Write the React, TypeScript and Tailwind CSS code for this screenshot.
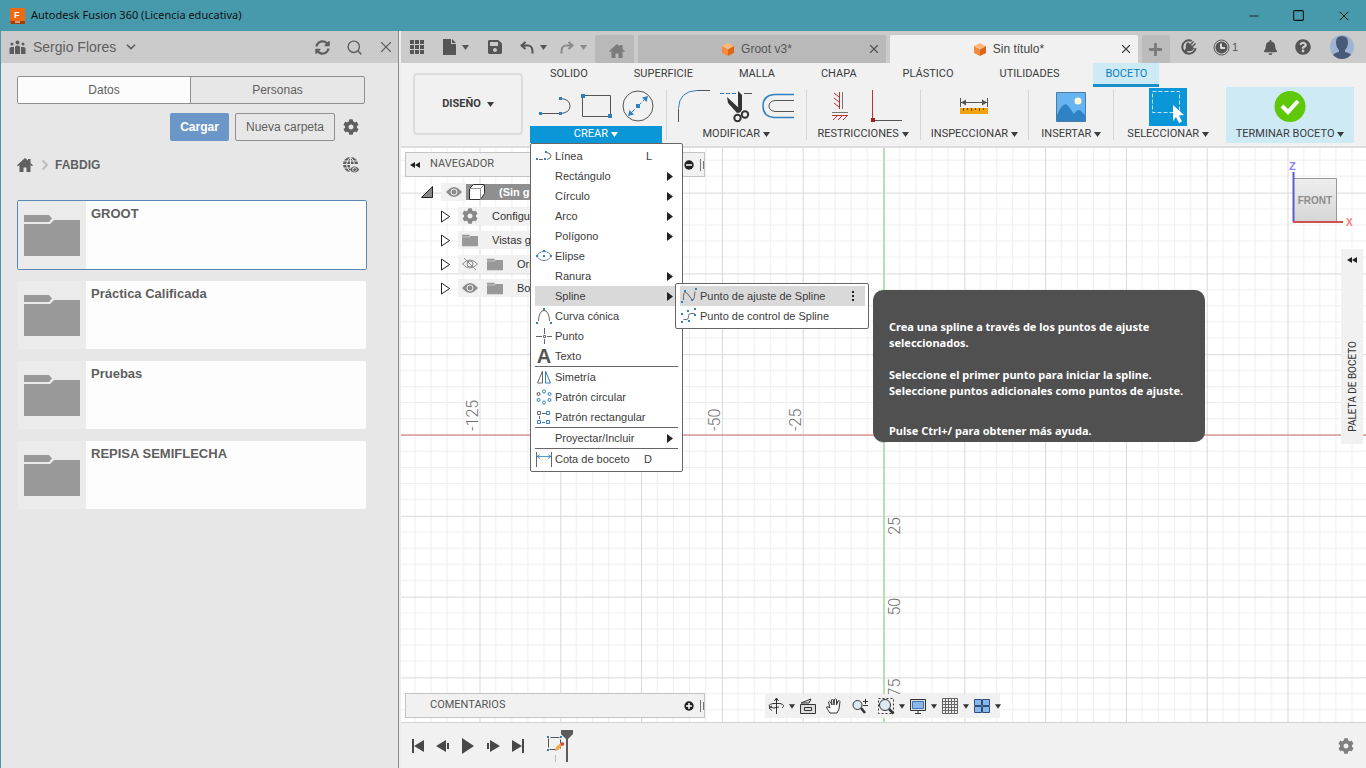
import type { ReactNode } from 'react';
import { ChevronDown, ChevronRight, Minus, Search, Square, X } from 'lucide-react';
import { FaBell, FaCog, FaEye, FaPlus, FaQuestionCircle, FaSave, FaSyncAlt } from 'react-icons/fa';

const BLUE = '#2f7fc1';

function Caret({ className = '' }: { className?: string }) {
  return (
    <svg className={`shrink-0 ${className}`} width="7" height="5" viewBox="0 0 7 5" fill="currentColor">
      <path d="M0 0h7L3.5 5z" />
    </svg>
  );
}

function IconCube() {
  return (
    <svg width="14" height="15" viewBox="0 0 14 15">
      <path d="M7 1l6 3-6 3.5L1 4z" fill="#ffb87a" />
      <path d="M1 4l6 3.5V14l-6-3z" fill="#f58a3c" />
      <path d="M13 4L7 7.500V14l6-3z" fill="#d9661a" />
    </svg>
  );
}

function IconHome() {
  return (
    <svg width="16" height="14" viewBox="0 0 16 14" fill="currentColor">
      <path d="M8 0l3 2.600V1h2.500v4L16 7.200l-1 1-1.500-1.200V14H9.500V9.500h-3V14h-4V7L1 8.200l-1-1z" />
    </svg>
  );
}

function IconGlobe() {
  return (
    <svg width="16" height="16" viewBox="0 0 16 16" fill="none" stroke="#e7e7e7">
      <circle cx="7.500" cy="7.500" r="7.500" fill="#5d5d5d" stroke="none" />
      <path d="M7.500 0v15M0 7.500h15M1 4h13M1 11h13M7.500 0q-8 7.500 0 15M7.500 0q8 7.500 0 15" />
    </svg>
  );
}

function IconPeople() {
  return (
    <svg width="17" height="15" viewBox="0 0 17 15" fill="#5d5d5d">
      <circle cx="8.500" cy="2.500" r="2" /><circle cx="3" cy="4" r="1.500" /><circle cx="14" cy="4" r="1.500" />
      <path d="M6 14V7q0-1.500 2.500-1.500T11 7v7zM.5 14V8.500q0-1.500 2-1.500H5v7zM16.500 14V8.500q0-1.500-2-1.500H12v7z" />
    </svg>
  );
}

function IconFolder({ width = 56, height = 41 }: { width?: number; height?: number }) {
  return (
    <svg width={width} height={height} viewBox="0 0 56 41" fill="#999">
      <path d="M0 0h25l3 3.500L25 7H0z" />
      <path d="M0 9h26l4-4h26v36H0z" />
    </svg>
  );
}

// ---------- Data panel ----------

const FOLDERS = ['GROOT', 'Práctica Calificada', 'Pruebas', 'REPISA SEMIFLECHA'];

function DataPanel() {
  return (
    <aside className="flex w-[399px] shrink-0 flex-col border-l border-l-[#469aac] border-r border-r-[#8c8c8c] bg-[#e7e7e7] text-[#5f5f5f]">
      <div className="flex h-8 items-center bg-[#cbcbcb] pl-2 pr-[3px]">
        <IconPeople />
        <button className="ml-[7px] flex items-center gap-2 text-sm">
          Sergio Flores <ChevronDown size={14} strokeWidth={3} />
        </button>
        <button className="ml-auto" aria-label="Actualizar"><FaSyncAlt size={15} /></button>
        <button className="ml-4" aria-label="Buscar"><Search size={17} strokeWidth={2} /></button>
        <button className="ml-[14px]" aria-label="Cerrar panel"><X size={18} strokeWidth={1.500} /></button>
      </div>

      <div className="flex flex-col pl-4 pr-[33px] pt-[13px] text-xs">
        <div className="grid h-7 grid-cols-2 overflow-hidden rounded-xs border border-[#8f8f8f]">
          <button className="border-r border-[#8f8f8f] bg-[#fcfcfc]">Datos</button>
          <button>Personas</button>
        </div>

        <div className="mt-[9px] flex items-center justify-end pr-[6px]">
          <button className="h-7 w-[59px] rounded-xs bg-[#6b96c8] font-bold text-white">Cargar</button>
          <button className="ml-[6px] h-7 w-[100px] rounded-xs border border-[#8f8f8f]">Nueva carpeta</button>
          <button className="ml-2" aria-label="Configuración"><FaCog size={16} /></button>
        </div>

        <div className="mt-[15px] flex h-[18px] items-center pr-[6px]">
          <button aria-label="Inicio"><IconHome /></button>
          <ChevronRight className="ml-1 text-[#bdbdbd]" size={16} strokeWidth={3} />
          <span className="ml-[2px] font-bold">FABDIG</span>
          <button className="relative ml-auto" aria-label="Vista web">
            <IconGlobe />
            <FaEye className="absolute -bottom-px right-0 bg-[#e7e7e7]" size={9} />
          </button>
        </div>
      </div>

      <div className="mt-[26px] flex flex-col gap-[10px] pl-4 pr-[31px]">
        {FOLDERS.map((name, i) => (
          <button
            key={name}
            className={`flex h-[70px] overflow-hidden rounded-xs border text-left ${i === 0 ? 'border-[#5c86b8]' : 'border-[#e7e7e7]'}`}
          >
            <span className="flex h-full w-[68px] items-center justify-center bg-[#ebebeb]"><IconFolder /></span>
            <span className="h-full flex-1 bg-[#fdfdfd] pl-[5px] pt-[5px] text-[13px] leading-4 font-bold">{name}</span>
          </button>
        ))}
      </div>
    </aside>
  );
}

// ---------- Document tabs ----------

function DocTab({ title, active }: { title: string; active?: boolean }) {
  return (
    <div className={`flex h-7 min-w-0 flex-1 items-center rounded-t-xs pl-2 pr-[5px] text-xs ${active ? 'bg-[#f1f1f1] text-[#444]' : 'bg-[#b9b9b9] text-[#555]'}`}>
      <button className="flex flex-1 items-center justify-center gap-[6px]"><IconCube />{title}</button>
      <button aria-label={`Cerrar ${title}`}><X size={14} strokeWidth={2} /></button>
    </div>
  );
}

function AppBar() {
  return (
    <div className="flex h-8 items-center bg-[#cbcbcb] text-[#555]">
      <div className="flex shrink-0 items-center pl-[9px] pr-2">
        <button aria-label="Panel de datos">
          <svg width="14" height="14" viewBox="0 0 14 14" fill="currentColor">
            <path d="M0 0h4v4H0zM5 0h4v4H5zM10 0h4v4h-4zM0 5h4v4H0zM5 5h4v4H5zM10 5h4v4h-4zM0 10h4v4H0zM5 10h4v4H5zM10 10h4v4h-4z" />
          </svg>
        </button>
        <button className="ml-[19px] flex items-center gap-[6px]" aria-label="Archivo">
          <svg width="13" height="16" viewBox="0 0 13 16" fill="currentColor"><path d="M0 0h8v5h5v11H0zM9 0l4 4H9z" /></svg>
          <Caret />
        </button>
        <button className="ml-[18px]" aria-label="Guardar"><FaSave size={16} /></button>
        <button className="ml-[17px] flex items-center gap-[6px]" aria-label="Deshacer">
          <svg width="14" height="13" viewBox="0 0 14 13" fill="none" stroke="currentColor" strokeWidth="2"><path d="M5.500 1L1.500 4.500l4 3.500M2 4.500h6q5 0 4.500 8" /></svg>
          <Caret />
        </button>
        <button className="ml-[13px] flex items-center gap-[6px] text-[#8b8b8b]" aria-label="Rehacer">
          <svg width="14" height="13" viewBox="0 0 14 13" fill="none" stroke="currentColor" strokeWidth="2"><path d="M8.500 1l4 3.500-4 3.500M12 4.500H6q-5 0-4.500 8" /></svg>
          <Caret />
        </button>
      </div>

      <div className="flex min-w-0 flex-1 items-end gap-1 self-end">
        <button className="flex h-7 w-[39px] items-center justify-center rounded-t-xs bg-[#b9b9b9] pl-1 pt-1 text-[#7b7b7b]" aria-label="Inicio"><IconHome /></button>
        <DocTab title="Groot v3*" />
        <DocTab title="Sin título*" active />
        <button className="flex h-7 w-7 items-center justify-center rounded-t-xs bg-[#bcbcbc] text-[#7b7b7b]" aria-label="Nuevo diseño"><FaPlus size={15} /></button>
      </div>

      <div className="flex shrink-0 items-center pl-[11px] pr-3">
        <button aria-label="Extensiones">
          <svg width="16" height="16" viewBox="0 0 16 16">
            <circle cx="8" cy="8" r="6.700" fill="none" stroke="#555" strokeWidth="2" strokeDasharray="33 9" transform="rotate(10 8 8)" />
            <path d="M3 12l2-3q-1-4 2-6l2 2 3-3 1 1-3 3 1 1 3-3 1 1-3 3 1 2q-3 3-6 2l-3 2z" fill="#555" />
          </svg>
        </button>
        <button className="ml-4 flex items-center gap-[2px] text-[11px]">
          <svg width="17" height="17" viewBox="0 0 17 17">
            <circle cx="8.500" cy="8.500" r="7.500" fill="none" stroke="#555" />
            <circle cx="8.500" cy="8.500" r="6" fill="#555" />
            <path d="M8 4.500V9h4" fill="none" stroke="#fff" strokeWidth="1.500" />
          </svg>
          1
        </button>
        <button className="ml-[25px]" aria-label="Notificaciones"><FaBell size={15} /></button>
        <button className="ml-[17px]" aria-label="Ayuda"><FaQuestionCircle size={16} /></button>
        <button className="ml-[19px]" aria-label="Perfil">
          <svg width="24" height="24" viewBox="0 0 24 24">
            <circle cx="12" cy="12" r="12" fill="#9db4d2" />
            <path d="M12 1q6 0 6 6 0 5-3 8v2q5 1 6 3-4 4-9 4t-9-4q1-2 6-3v-2Q6 12 6 7q0-6 6-6z" fill="#485a78" />
          </svg>
        </button>
      </div>
    </div>
  );
}

// ---------- Ribbon ----------

const RIBBON_TABS = ['SOLIDO', 'SUPERFICIE', 'MALLA', 'CHAPA', 'PLÁSTICO', 'UTILIDADES', 'BOCETO'];

function RibbonGroup({ label, width, open, finish, icons, children }: {
  label: string; width: string; open?: boolean; finish?: boolean; icons: ReactNode; children?: ReactNode;
}) {
  return (
    <div className={`relative flex flex-col ${width} ${finish ? 'bg-[#cdeaf5]' : ''}`}>
      <div className="flex h-[39px] items-center justify-center gap-2">{icons}</div>
      <button className={`flex h-[17px] items-center justify-center gap-[3px] whitespace-nowrap ${open ? 'bg-[#0b96d8] text-white' : ''}`}>
        {label} <Caret />
      </button>
      {children}
    </div>
  );
}

const Separator = () => <div className="mt-[3px] h-[50px] w-px bg-[#d6d6d6]" />;

function Ribbon() {
  return (
    <div className="flex h-[85px] border-b-2 border-[#dedede] bg-[#f1f1f1] font-[Roboto,sans-serif] text-[11px] text-[#3c3c3c]">
      <button className="ml-3 mt-[10px] flex h-[62px] w-[110px] shrink-0 items-center justify-center gap-[6px] rounded-sm border-2 border-[#dcdcdc] font-bold">
        DISEÑO <Caret />
      </button>

      <div className="ml-[7px] flex min-w-0 flex-1 flex-col">
        <div className="flex h-6 gap-[22px] pl-2">
          {RIBBON_TABS.map(tab => (
            <button
              key={tab}
              className={`border-b-3 px-3 pt-[2px] ${tab === 'BOCETO' ? 'border-[#1b8fc9] bg-[#cdeaf5] text-[#0a7fc0]' : 'border-transparent'}`}
            >
              {tab}
            </button>
          ))}
        </div>

        <div className="flex pr-3">
          <RibbonGroup
            label="CREAR"
            width="w-[132px]"
            open
            icons={
              <>
                <svg width="34" height="32" viewBox="0 0 34 32" fill="none" stroke="#555">
                  <path d="M3 22.500h20M23 7.500q9 1 9 7.500t-9 7.500" />
                  <path d="M1 21h3v3H1zM21 21h3v3h-3zM21 6h3v3h-3z" fill={BLUE} stroke="none" />
                </svg>
                <svg width="32" height="32" viewBox="0 0 32 32" fill="none" stroke="#555">
                  <path d="M2.500 4.500h28v21h-28z" />
                  <path d="M1 3h4v4H1zM28 23h4v4h-4z" fill={BLUE} stroke="none" />
                </svg>
                <svg width="34" height="34" viewBox="0 0 34 34" fill="none">
                  <circle cx="18" cy="16" r="15" stroke="#555" />
                  <path d="M10 24L26 8" stroke={BLUE} strokeDasharray="7 2" />
                  <path d="M28 6l-1.500 6-4.500-4.500zM8 26l1.500-6L14 24.500zM16 14h4v4h-4z" fill={BLUE} />
                </svg>
              </>
            }
          >
            <CreateMenu />
          </RibbonGroup>
          <div className="w-1" />
          <Separator />
          <RibbonGroup
            label="MODIFICAR"
            width="w-[139px]"
            icons={
              <>
                <svg width="34" height="34" viewBox="0 0 34 34" fill="none">
                  <path d="M1.500 18.500Q2 1 20 .5" stroke={BLUE} /><path d="M20 .5h13M1.500 19v13" stroke="#555" />
                </svg>
                <svg width="34" height="34" viewBox="0 0 34 34" fill="none">
                  <path d="M1 3.500h18" stroke={BLUE} strokeDasharray="4 2" /><path d="M25 3.500h8" stroke="#555" />
                  <path d="M19 1l4 4v15l-3 3-1-8zM8 7l13 12 1 3-4 1-9-10z" fill="#333" />
                  <circle cx="18.500" cy="28" r="3.200" stroke="#333" strokeWidth="2" /><circle cx="26" cy="24.500" r="3.200" stroke="#333" strokeWidth="2" />
                </svg>
                <svg width="34" height="34" viewBox="0 0 34 34" fill="none">
                  <path d="M33 4.500H13q-11 1-11 11.500T13 27.500h20" stroke={BLUE} strokeWidth="1.500" />
                  <path d="M33 10.500H14q-6 1-6 5.500t6 5.500h19" stroke="#555" />
                </svg>
              </>
            }
          />
          <Separator />
          <RibbonGroup
            label="RESTRICCIONES"
            width="w-[113px]"
            icons={
              <div className="flex gap-5 pl-2">
                <svg width="18" height="34" viewBox="0 0 18 34" fill="none" stroke="#c03030">
                  <path d="M8.500 2v17M3 3l5 4M3 8l5 4M3 13l5 4M2 30l4-4M7 30l4-4M12 30l4-4M1 25.500h16" />
                  <path d="M11.500 2v17M1 22.500h16" stroke="#777" />
                </svg>
                <svg width="34" height="34" viewBox="0 0 34 34" fill="none">
                  <path d="M3.500 0v30" stroke="#c03030" /><path d="M4 30.500h29" stroke="#555" /><path d="M2 28h4v4H2z" fill="#a02020" />
                </svg>
              </div>
            }
          />
          <Separator />
          <RibbonGroup
            label="INSPECCIONAR"
            width="w-[108px]"
            icons={
              <svg width="30" height="22" viewBox="0 0 30 22">
                <path d="M1.500 2v9M28.500 2v9M2 6.500h26" stroke="#555" />
                <path d="M2 6.500l5-3v6zM28 6.500l-5-3v6z" fill="#555" />
                <path d="M1 12h28v6H1z" fill="#f0a30c" />
                <path d="M4.500 12v3M8.500 12v2M12.500 12v3M16.500 12v2M20.500 12v3M24.500 12v2" stroke="#6b4a00" />
              </svg>
            }
          />
          <Separator />
          <RibbonGroup
            label="INSERTAR"
            width="w-[84px]"
            icons={
              <svg width="30" height="30" viewBox="0 0 30 30">
                <path d="M.5.5h29v29H.5z" fill="#66b5f2" stroke="#4b7ba6" />
                <path d="M1 23q7-16 12-8l5 7q4-6 7-3l4 4v6H1z" fill="#2f83c4" />
                <circle cx="22" cy="9" r="3.500" fill="#fffbd8" />
              </svg>
            }
          />
          <Separator />
          <RibbonGroup
            label="SELECCIONAR"
            width="w-[108px]"
            icons={
              <svg width="38" height="38" viewBox="0 0 38 38">
                <path d="M0 0h38v38H0z" fill="#0b96d8" />
                <path d="M3.500 3.500h27v21h-27z" fill="none" stroke="#bfe3f5" strokeDasharray="4 2" />
                <path d="M24 17l11 10-5 .5 3 6-3 1.500-3-6-3 4z" fill="#fff" />
              </svg>
            }
          />
          <div className="min-w-1 flex-1" />
          <RibbonGroup
            label="TERMINAR BOCETO"
            width="w-[128px]"
            finish
            icons={
              <svg width="32" height="32" viewBox="0 0 32 32">
                <circle cx="16" cy="15.500" r="15.500" fill="#5fc808" />
                <path d="M8 15l6 6 10-11" fill="none" stroke="#fff" strokeWidth="4" />
              </svg>
            }
          />
        </div>
      </div>
    </div>
  );
}

// ---------- Create menu ----------

// 16x16 glyphs, dots are the sketch points
const dots = (pts: number[][]) => pts.map(([x, y]) => <rect key={`${x}-${y}`} x={x} y={y} width="2" height="2" fill={BLUE} stroke="none" />);

const MENU_ICONS: Record<string, ReactNode> = {
  line: <>{dots([[0, 10], [8, 10], [9, 3]])}<path d="M3 11.500h4M11 4.500q4 1 4 3.500t-4 3.500" /></>,
  ellipse: <><ellipse cx="8" cy="8" rx="6.500" ry="4.500" stroke="#6b8cab" />{dots([[7, 7], [0, 7], [14, 7], [7, 2]])}</>,
  conic: <><path d="M2.500 13Q3 2.500 8 2.500T13.500 13" />{dots([[0, 14], [14, 14], [7, 0]])}</>,
  point: <path d="M8.500 0v6M8.500 11v5M0 8.500h6M11 8.500h5M7.500 7.500h2v2h-2z" />,
  mirror: <><path d="M6.500 2v12h-5z" /><path d="M9.500 2v12h5z" stroke={BLUE} /></>,
  circular: (
    <g stroke={BLUE}>
      <circle cx="8" cy="2.500" r="1.500" /><circle cx="13.500" cy="5" r="1.500" /><circle cx="13.500" cy="11" r="1.500" />
      <circle cx="8" cy="13.500" r="1.500" /><circle cx="2.500" cy="11" r="1.500" /><circle cx="2.500" cy="5" r="1.500" stroke="#555" />
    </g>
  ),
  rectangular: (
    <>
      <path d="M1.500 2.500h3v3h-3zM6 4.500h4M3.500 7v3" />
      <path d="M10.500 2.500h3v3h-3zM1.500 11.500h3v3h-3zM10.500 11.500h3v3h-3zM6 13.500h3" stroke={BLUE} />
    </>
  ),
  dimension: <><path d="M.5 1v15M15.500 1v15" /><path d="M1 5.500h14M4 3.500l-3 2 3 2M12 3.500l3 2-3 2" stroke={BLUE} strokeWidth=".8" /></>,
  fit: <><path d="M2.500 12Q2 4 4.500 4.500T10 10.500t4-7" />{dots([[0, 13], [3, 2], [10, 11], [14, 0]])}</>,
  control: <><path d="M2.500 11.500h3q2 0 2-3t2-3h4" />{dots([[0, 5], [0, 13], [7, 12], [6, 2], [13, 0], [13, 6]])}</>,
};

type MenuEntry = { label: string; icon?: string; sub?: boolean; shortcut?: string } | null;

const MENU: MenuEntry[] = [
  { label: 'Línea', icon: 'line', shortcut: 'L' },
  { label: 'Rectángulo', sub: true },
  { label: 'Círculo', sub: true },
  { label: 'Arco', sub: true },
  { label: 'Polígono', sub: true },
  { label: 'Elipse', icon: 'ellipse' },
  { label: 'Ranura', sub: true },
  { label: 'Spline', sub: true },
  { label: 'Curva cónica', icon: 'conic' },
  { label: 'Punto', icon: 'point' },
  { label: 'Texto', icon: 'text' },
  null,
  { label: 'Simetría', icon: 'mirror' },
  { label: 'Patrón circular', icon: 'circular' },
  { label: 'Patrón rectangular', icon: 'rectangular' },
  null,
  { label: 'Proyectar/Incluir', sub: true },
  null,
  { label: 'Cota de boceto', icon: 'dimension', shortcut: 'D' },
];

function MenuIcon({ name }: { name?: string }) {
  if (name === 'text') return <span className="w-4 shrink-0 text-center text-xl leading-5 font-bold text-[#555]">A</span>;
  return (
    <svg className="shrink-0" width="16" height="16" viewBox="0 0 16 16" fill="none" stroke="#666">
      {name && MENU_ICONS[name]}
    </svg>
  );
}

function CreateMenu() {
  return (
    <div className="absolute left-0 top-full z-20 flex w-[153px] flex-col rounded-xs border border-[#666] bg-white py-[2px] pl-1 font-['Liberation_Sans',sans-serif] text-[11px] text-[#3c3c3c]">
      {MENU.map((item, i) => {
        if (!item) return <hr key={i} className="mr-1 border-[#666]" />;
        const open = item.label === 'Spline';
        return (
          <div key={item.label} className={`relative ${open ? 'bg-[#d9d9d9]' : ''}`}>
            <button className="flex h-5 w-full items-center gap-[3px] pl-px text-left whitespace-nowrap">
              <MenuIcon name={item.icon} />
              {item.label}
              {item.shortcut && <span className="ml-auto pr-[30px]">{item.shortcut}</span>}
              {item.sub && (
                <svg className="ml-auto mr-[9px]" width="6" height="9" viewBox="0 0 6 9" fill="#222"><path d="M0 0v9l6-4.500z" /></svg>
              )}
            </button>
            {open && <SplineMenu />}
          </div>
        );
      })}
    </div>
  );
}

function SplineMenu() {
  return (
    <div className="absolute -top-[3px] left-[140px] w-[194px] rounded-xs border border-[#666] bg-white py-[2px] pl-1 pr-[3px]">
      <button className="flex h-5 w-full items-center gap-[3px] bg-[#d9d9d9] pl-px whitespace-nowrap">
        <MenuIcon name="fit" />
        Punto de ajuste de Spline
        <svg className="ml-auto mr-[10px]" width="3" height="12" viewBox="0 0 3 12" fill="#222"><path d="M0 1h2v2H0zM0 5h2v2H0zM0 9h2v2H0z" /></svg>
      </button>
      <button className="flex h-5 w-full items-center gap-[3px] pl-px whitespace-nowrap">
        <MenuIcon name="control" />
        Punto de control de Spline
      </button>
      <div role="tooltip" className="absolute left-[197px] top-[6px] flex w-[332px] flex-col gap-4 rounded-[10px] bg-[#505050] pb-[3px] pl-4 pr-2 pt-[29px] font-['Noto_Sans',sans-serif] text-[11px] leading-4 font-bold text-white">
        <p>Crea una spline a través de los puntos de ajuste<br />seleccionados.</p>
        <p>Seleccione el primer punto para iniciar la spline.<br />Seleccione puntos adicionales como puntos de ajuste.</p>
        <p className="mt-2">Pulse Ctrl+/ para obtener más ayuda.</p>
      </div>
    </div>
  );
}

// ---------- Canvas ----------

const RULER_X = [-125, -50, -25];
const RULER_Y = [25, 50, 75];
const STEP = 80.8; // 25 mm on screen

function SketchGrid() {
  return (
    <svg className="absolute inset-0 h-full w-full">
      <defs>
        <pattern id="grid" width={STEP} height={STEP} patternUnits="userSpaceOnUse">
          {[1, 2, 3, 4].map(n => (
            <path key={n} d={`M${(n * STEP) / 5} 0V${STEP}M0 ${(n * STEP) / 5}H${STEP}`} stroke="#eeeeee" />
          ))}
          <path d={`M.5 0V${STEP}M0 .5H${STEP}`} stroke="#d8d8d8" />
        </pattern>
      </defs>
      <svg x="50%" y="50%" overflow="visible">
        <rect x="-2020" y="-2020" width="4040" height="4040" fill="url(#grid)" />
        <path d="M-2020 0H2020" stroke="#dc9a9a" strokeWidth="1.500" />
        <path d="M.5-2020V2020" stroke="#b4e0b4" strokeWidth="2" />
        <g className="font-[Roboto,sans-serif] text-[16px] font-light" fill="#6f6f6f">
          {RULER_X.map(v => <text key={v} transform={`translate(${(v / 25) * STEP - 2} -4) rotate(-90)`}>{v}</text>)}
          {RULER_Y.map(v => <text key={v} transform={`translate(16 ${(v / 25) * STEP + 19}) rotate(-90)`}>{v}</text>)}
        </g>
        <circle cx="0" cy="0" r="8" fill="#b5c8b5" />
      </svg>
    </svg>
  );
}

function Rewind() {
  return <svg width="10" height="6" viewBox="0 0 10 6" fill="#222"><path d="M5 0v6L0 3zM10 0v6L5 3z" /></svg>;
}

function PanelEnd({ plus }: { plus?: boolean }) {
  return (
    <span className="ml-auto flex items-center gap-[6px]">
      <svg width="10" height="10" viewBox="0 0 10 10"><circle cx="5" cy="5" r="4.700" fill="#222" /><path d={plus ? 'M2 5h6M5 2v6' : 'M2 5h6'} stroke="#fff" strokeWidth="1.500" /></svg>
      <svg width="4" height="12" viewBox="0 0 4 12" stroke="#777"><path d="M.5 0v12M3.500 2v8" /></svg>
    </span>
  );
}

function Eye({ off }: { off?: boolean }) {
  return (
    <svg className="shrink-0" width="16" height="14" viewBox="0 0 16 14" fill="none" stroke="#8c8c8c">
      {off ? (
        <><path d="M.5 7Q8-1 15.500 7 8 15 .5 7z" /><circle cx="8" cy="7" r="3" /><path d="M2 1l12 12" /></>
      ) : (
        <><path d="M.5 7Q8-2 15.500 7 8 16 .5 7z" fill="#8c8c8c" /><circle cx="8" cy="7" r="3" stroke="#f1f1f1" /></>
      )}
    </svg>
  );
}

const BROWSER_ROWS = [
  { label: 'Configuración', icon: <FaCog className="shrink-0" size={16} color="#888" /> },
  { label: 'Vistas guardadas', icon: <IconFolder width={16} height={13} /> },
  { label: 'Origen', icon: <IconFolder width={16} height={13} />, eye: 'off' },
  { label: 'Bocetos', icon: <IconFolder width={16} height={13} />, eye: 'on' },
];

function BrowserPanel() {
  return (
    <div className="absolute left-1 top-1 w-[300px] font-[Roboto,sans-serif] text-[11px] text-[#555]">
      <div className="flex h-[25px] items-center border border-[#c4c4c4] bg-[#f1f1f1] pl-1">
        <button aria-label="Contraer"><Rewind /></button>
        <span className="ml-[10px]">NAVEGADOR</span>
        <PanelEnd />
      </div>
      <div className="flex w-[126px] flex-col overflow-hidden pt-[3px] font-['Liberation_Sans',sans-serif] whitespace-nowrap text-[#333]">
        <div className="flex h-6 items-center pl-4">
          <svg className="shrink-0" width="12" height="12" viewBox="0 0 12 12"><path d="M11.500.5v11H.5z" fill="#888" stroke="#222" /></svg>
          <span className="ml-2 flex h-[18px] w-[25px] shrink-0 items-center justify-center bg-[#f1f1f1]"><Eye /></span>
          <span className="flex h-4 min-w-0 flex-1 items-center overflow-hidden bg-[#8f8f8f] pl-[3px] font-bold text-white">
            <svg className="shrink-0" width="16" height="16" viewBox="0 0 16 16" fill="#fff" stroke="#333"><path d="M.5 4.500l4-4h11v9l-4 6H.5z" /><path d="M.5 4.500h11v11M11.500 4.500l4-4" stroke="#999" /></svg>
            <span className="ml-[14px] min-w-0 flex-1 overflow-hidden">(Sin guardar)</span>
          </span>
        </div>
        {BROWSER_ROWS.map(row => (
          <div key={row.label} className="flex h-6 items-center pl-9">
            <svg className="shrink-0" width="9" height="13" viewBox="0 0 9 13" fill="#fff" stroke="#222"><path d="M.5 1v11l8-5.500z" /></svg>
            <span className="ml-2 flex h-[18px] min-w-0 flex-1 items-center bg-[#f1f1f1] pl-1">
              {row.eye && <span className="mr-[9px]"><Eye off={row.eye === 'off'} /></span>}
              <span className="shrink-0">{row.icon}</span>
              <span className="ml-[14px] min-w-0 flex-1 overflow-hidden">{row.label}</span>
            </span>
          </div>
        ))}
      </div>
    </div>
  );
}

const NAV_ICONS = [
  { label: 'Orbitar', caret: true, icon: <path d="M8.500 0v16M6.500 3l2-3 2 3M14 10q4-3-2-4.500H5Q-1 7 2 9t9 0M4 8l-3 2 3 2.500" /> },
  { label: 'Mirar a', icon: <path d="M.5 6.500h15v9H.5zM4.500 9.500h7v3h-7zM1 5l10-4-2 4z" fill="#ddd" /> },
  { label: 'Encuadre', icon: <path d="M4 15q-3-4-3.500-6 1-1 3.500 1L2.500 4q1-1.500 2 0L6 7 5.500 2Q6.500 0 7.500 2L8 7l.5-5.500q1-1.500 2 0L10.500 7 12 3q1.500-1 2 .5L13 11l-2 4z" fill="#fff" /> },
  { label: 'Zoom', icon: <><circle cx="5.500" cy="7" r="4.500" fill="#dceaf2" /><path d="M9 10l4 5" strokeWidth="2.500" /><path d="M11 3.500h5M13.500 1v5M11 7.500h5" /></> },
  { label: 'Ajustar', caret: true, icon: <><path d="M.5.5h15v15H.5z" strokeDasharray="2 2" /><circle cx="7" cy="7" r="5.500" fill="#dceaf2" /><path d="M11 11l4.500 4.500" strokeWidth="2.500" /></> },
  { label: 'Visualización', caret: true, icon: <><path d="M.5 1.500h15v11H.5zM5 15.500h6M8 13v2" fill="#ddd" /><path d="M2.500 3.500h11v7h-11z" fill="#8bb6ea" stroke="#3f74b5" /></> },
  { label: 'Rejilla', caret: true, icon: <path d="M.5.5h15v15H.5zM3.500 0v16M6.500 0v16M9.500 0v16M12.500 0v16M0 3.500h16M0 6.500h16M0 9.500h16M0 12.500h16" stroke="#666" /> },
  { label: 'Ventanas', caret: true, icon: <path d="M.5 1.500h7v6h-7zM8.500 1.500h7v6h-7zM.5 8.500h7v6h-7zM8.500 8.500h7v6h-7z" fill="#8bb6ea" stroke="#2d4f7d" /> },
];

function NavBar() {
  return (
    <div className="absolute bottom-1 left-[364px] flex h-6 items-center gap-[9px] bg-[#f1f1f1] px-[3px] text-[#333]">
      {NAV_ICONS.map(n => (
        <button key={n.label} aria-label={n.label} className={`flex items-center ${n.caret ? 'gap-1 -mr-1' : ''}`}>
          <svg width="17" height="17" viewBox="0 0 17 17" fill="none" stroke="#333">{n.icon}</svg>
          {n.caret && <Caret className="w-[6px]" />}
        </button>
      ))}
    </div>
  );
}

function ViewCube() {
  return (
    <svg className="absolute right-2 top-[10px] font-['Liberation_Sans',sans-serif] font-bold" width="74" height="72" viewBox="0 0 74 72">
      <defs>
        <linearGradient id="face" x2="0" y2="1"><stop stopColor="#efefef" /><stop offset="1" stopColor="#d5d5d5" /></linearGradient>
      </defs>
      <path d="M9.500 20.500h43v43h-43z" fill="url(#face)" stroke="#999" />
      <path d="M9.500 14v50" stroke="#5b5bd0" strokeWidth="2" />
      <path d="M9 64h50" stroke="#d05050" strokeWidth="2" />
      <text x="31" y="46" textAnchor="middle" fontSize="10" fill="#8d8d8d">FRONT</text>
      <text x="5" y="12" fontSize="11" fill="#8585ea">Z</text>
      <text x="62" y="68" fontSize="10" fill="#f07b7b">X</text>
    </svg>
  );
}

function Canvas() {
  return (
    <div className="relative min-h-0 flex-1 overflow-hidden bg-white">
      <SketchGrid />
      <BrowserPanel />
      <ViewCube />
      <button className="absolute right-[3px] top-[101px] flex h-[195px] w-[22px] flex-col items-center justify-between bg-[#f1f1f1] pb-3 pt-2 text-[10px] text-[#333]">
        <Rewind />
        <span className="rotate-180 font-[Roboto,sans-serif] [writing-mode:vertical-rl]">PALETA DE BOCETO</span>
      </button>
      <div className="absolute bottom-1 left-1 flex h-[25px] w-[300px] items-center border border-[#c4c4c4] bg-[#f1f1f1] pl-6 font-[Roboto,sans-serif] text-[11px] text-[#555]">
        COMENTARIOS
        <PanelEnd plus />
      </div>
      <NavBar />
    </div>
  );
}

// ---------- Timeline ----------

const PLAYBACK = [
  { label: 'Ir al inicio', d: 'M2 1h2v14H2zM14 2v12L4 8z' },
  { label: 'Paso atrás', d: 'M11 2v12L1 8zM12 5h2v6h-2z' },
  { label: 'Reproducir', d: 'M2 0v16l12-8z' },
  { label: 'Paso adelante', d: 'M2 5h2v6H2zM5 2v12l10-6z' },
  { label: 'Ir al final', d: 'M2 2v12l10-6zM12 1h2v14h-2z' },
];

function Timeline() {
  return (
    <div className="flex h-[46px] shrink-0 items-center border-t border-[#d2d2d2] bg-[#f1f1f1] pl-[9px] pr-3 text-[#666]">
      <div className="flex gap-[9px] pt-px">
        {PLAYBACK.map(p => (
          <button key={p.label} aria-label={p.label}>
            <svg width="16" height="16" viewBox="0 0 16 16" fill="#484848"><path d={p.d} /></svg>
          </button>
        ))}
      </div>
      <button className="ml-5" aria-label="Boceto1">
        <svg width="28" height="34" viewBox="0 0 28 34" fill="none">
          <path d="M2.500 8.500h12v12h-12z" stroke="#555" strokeDasharray="9 3" strokeDashoffset="-2" />
          <path d="M1 7h2v2H1zM14 7h2v2h-2zM1 20h2v2H1z" fill={BLUE} />
          <path d="M9 22l1-4 6-5 2 2-6 6z" fill="#f0a848" /><circle cx="16.500" cy="15" r="1.800" fill="#d44" />
          <path d="M9.500 26v7" stroke="#bbb" />
          <path d="M15 1h12v4l-5 5h-2l-5-5zM20 9h2v24h-2z" fill="#5b5b5b" />
        </svg>
      </button>
      <button className="ml-auto pt-px" aria-label="Preferencias"><FaCog size={16} color="#808080" /></button>
    </div>
  );
}

export default function App() {
  return (
    <div className="flex h-screen flex-col bg-[#e7e7e7] font-['Liberation_Sans',sans-serif]">
      <header className="flex h-[31px] shrink-0 items-center bg-[#469aac] pl-[10px] text-[#111]">
        <svg width="15" height="16" viewBox="0 0 15 16">
          <path d="M0 0h14l1 1v15H1l-1-1z" fill="#ee6a12" /><path d="M0 13l1 3h14v-3z" fill="#a33f05" />
          <text x="4" y="10" fontSize="9" fontWeight="bold" fill="#fff">F</text>
          <path d="M5 14h5" stroke="#fff" />
        </svg>
        <h1 className="ml-[6px] font-['Noto_Sans',sans-serif] text-[11px]">Autodesk Fusion 360 (Licencia educativa)</h1>
        <div className="ml-auto flex items-center gap-[31px] pr-[14px]">
          <button aria-label="Minimizar"><Minus size={14} strokeWidth={1.500} /></button>
          <button aria-label="Maximizar"><Square size={13} strokeWidth={2} /></button>
          <button aria-label="Cerrar"><X size={16} strokeWidth={1.500} /></button>
        </div>
      </header>

      <div className="flex min-h-0 flex-1">
        <DataPanel />
        <main className="flex min-w-0 flex-1 flex-col border-l-2 border-[#ededed]">
          <AppBar />
          <Ribbon />
          <Canvas />
          <Timeline />
        </main>
      </div>
    </div>
  );
}
